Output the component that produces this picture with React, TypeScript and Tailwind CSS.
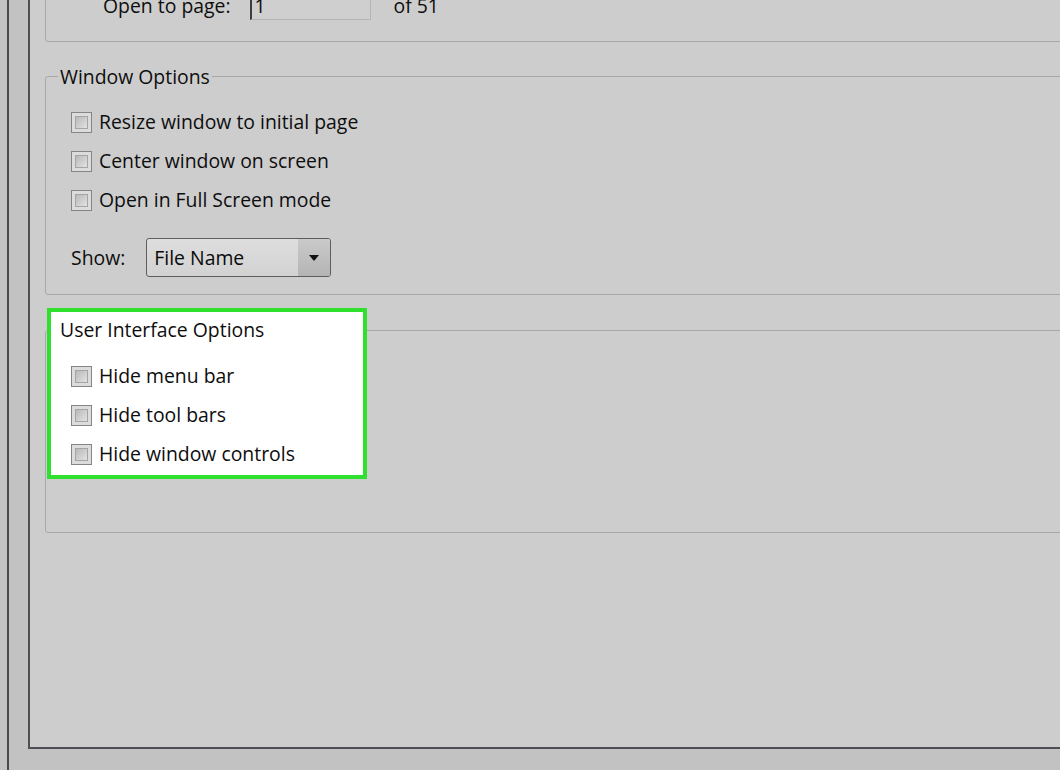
const font = { fontFamily: '"Open Sans", "Noto Sans", sans-serif' };

function Checkbox() {
  return (
    <div className="w-[21px] h-[21px] shrink-0 border border-[#858585] bg-[#dcdcdc] p-[3px]">
      <div className="w-full h-full border border-[#a5a5a5] bg-gradient-to-br from-[#b9b9b9] to-[#e2e2e2]" />
    </div>
  );
}

function CheckRow({ label, first }: { label: string; first?: boolean }) {
  return (
    <div className={`flex items-center h-[24px] ${first ? '' : 'mt-[15px]'}`}>
      <Checkbox />
      <span className="ml-[7px] text-[19.4px] leading-[24px] text-[#0d0d0d]">{label}</span>
    </div>
  );
}

export default function App() {
  return (
    <div className="w-[1060px] h-[770px] overflow-hidden bg-[#c2c2c2] flex" style={font}>
      {/* left frame */}
      <div className="w-[7px] h-full bg-[#c4c4c4]" />
      <div className="w-[21px] h-full border-l-2 border-[#4b4b4f] bg-[#c2c2c2]" />

      {/* main panel */}
      <div className="flex-1 h-[749px] border-l-2 border-b-2 border-[#4e4e54] bg-[#cdcdcd] overflow-hidden pl-[15px] flex flex-col">
        {/* Initial view groupbox (cut off at top) */}
        <div className="-mt-[20px] h-[62px] w-[1100px] shrink-0 border border-[#a6a8ac] rounded-[3px] flex items-start">
          <div className="flex items-center mt-[11px] h-[28px]">
            <span className="ml-[57px] text-[19.4px] leading-[24px] text-[#0d0d0d]">Open to page:</span>
            <div className="ml-[19px] w-[121px] h-[28px] border-l-2 border-l-[#3c3c3c] border-y border-r border-[#b4b4b4] bg-[#cfcfcf] text-[19.4px] leading-[26px] pl-[3px] text-[#0d0d0d]">
              1
            </div>
            <span className="ml-[23px] text-[19.4px] leading-[24px] text-[#0d0d0d]">of 51</span>
          </div>
        </div>

        {/* Window Options */}
        <div className="mt-[34px] h-[219px] w-[1100px] shrink-0 border border-[#a6a8ac] rounded-[3px] flex flex-col">
          <div className="-mt-[12px] ml-[12px] px-[2px] w-fit bg-[#cdcdcd] text-[19.4px] leading-[24px] text-[#0d0d0d]">
            Window Options
          </div>
          <div className="ml-[25px] mt-[21px] flex flex-col">
            <CheckRow label="Resize window to initial page" first />
            <CheckRow label="Center window on screen" />
            <CheckRow label="Open in Full Screen mode" />
            <div className="mt-[26px] flex items-center h-[39px]">
              <span className="text-[19.4px] leading-[24px] text-[#0d0d0d]">Show:</span>
              <div className="ml-[21px] w-[185px] h-[39px] rounded-[3px] border border-[#5e5e5e] bg-gradient-to-b from-[#dedede] to-[#d2d2d2] flex items-stretch overflow-hidden">
                <span className="flex-1 pl-[7px] self-center text-[19.4px] leading-[24px] text-[#0a0a0a]">File Name</span>
                <div className="w-[32px] bg-gradient-to-b from-[#cacaca] to-[#b4b4b4] flex items-center justify-center">
                  <svg width="10" height="6" viewBox="0 0 10 6">
                    <path d="M0 0 H10 L5 6 Z" fill="#111" />
                  </svg>
                </div>
              </div>
            </div>
          </div>
        </div>

        {/* User Interface Options */}
        <div className="relative mt-[35px] h-[203px] w-[1100px] shrink-0 border border-[#a6a8ac] rounded-[3px] flex flex-col">
          {/* green highlight */}
          <div className="absolute left-[1px] -top-[23px] w-[320px] h-[171px] border-[4px] border-[#2fe02f] bg-white" />
          <div className="relative -mt-[13px] ml-[12px] px-[2px] w-fit bg-white text-[19.4px] leading-[24px] text-[#0d0d0d]">
            User Interface Options
          </div>
          <div className="relative ml-[25px] mt-[22px] flex flex-col">
            <CheckRow label="Hide menu bar" first />
            <CheckRow label="Hide tool bars" />
            <CheckRow label="Hide window controls" />
          </div>
        </div>
      </div>
    </div>
  );
}
